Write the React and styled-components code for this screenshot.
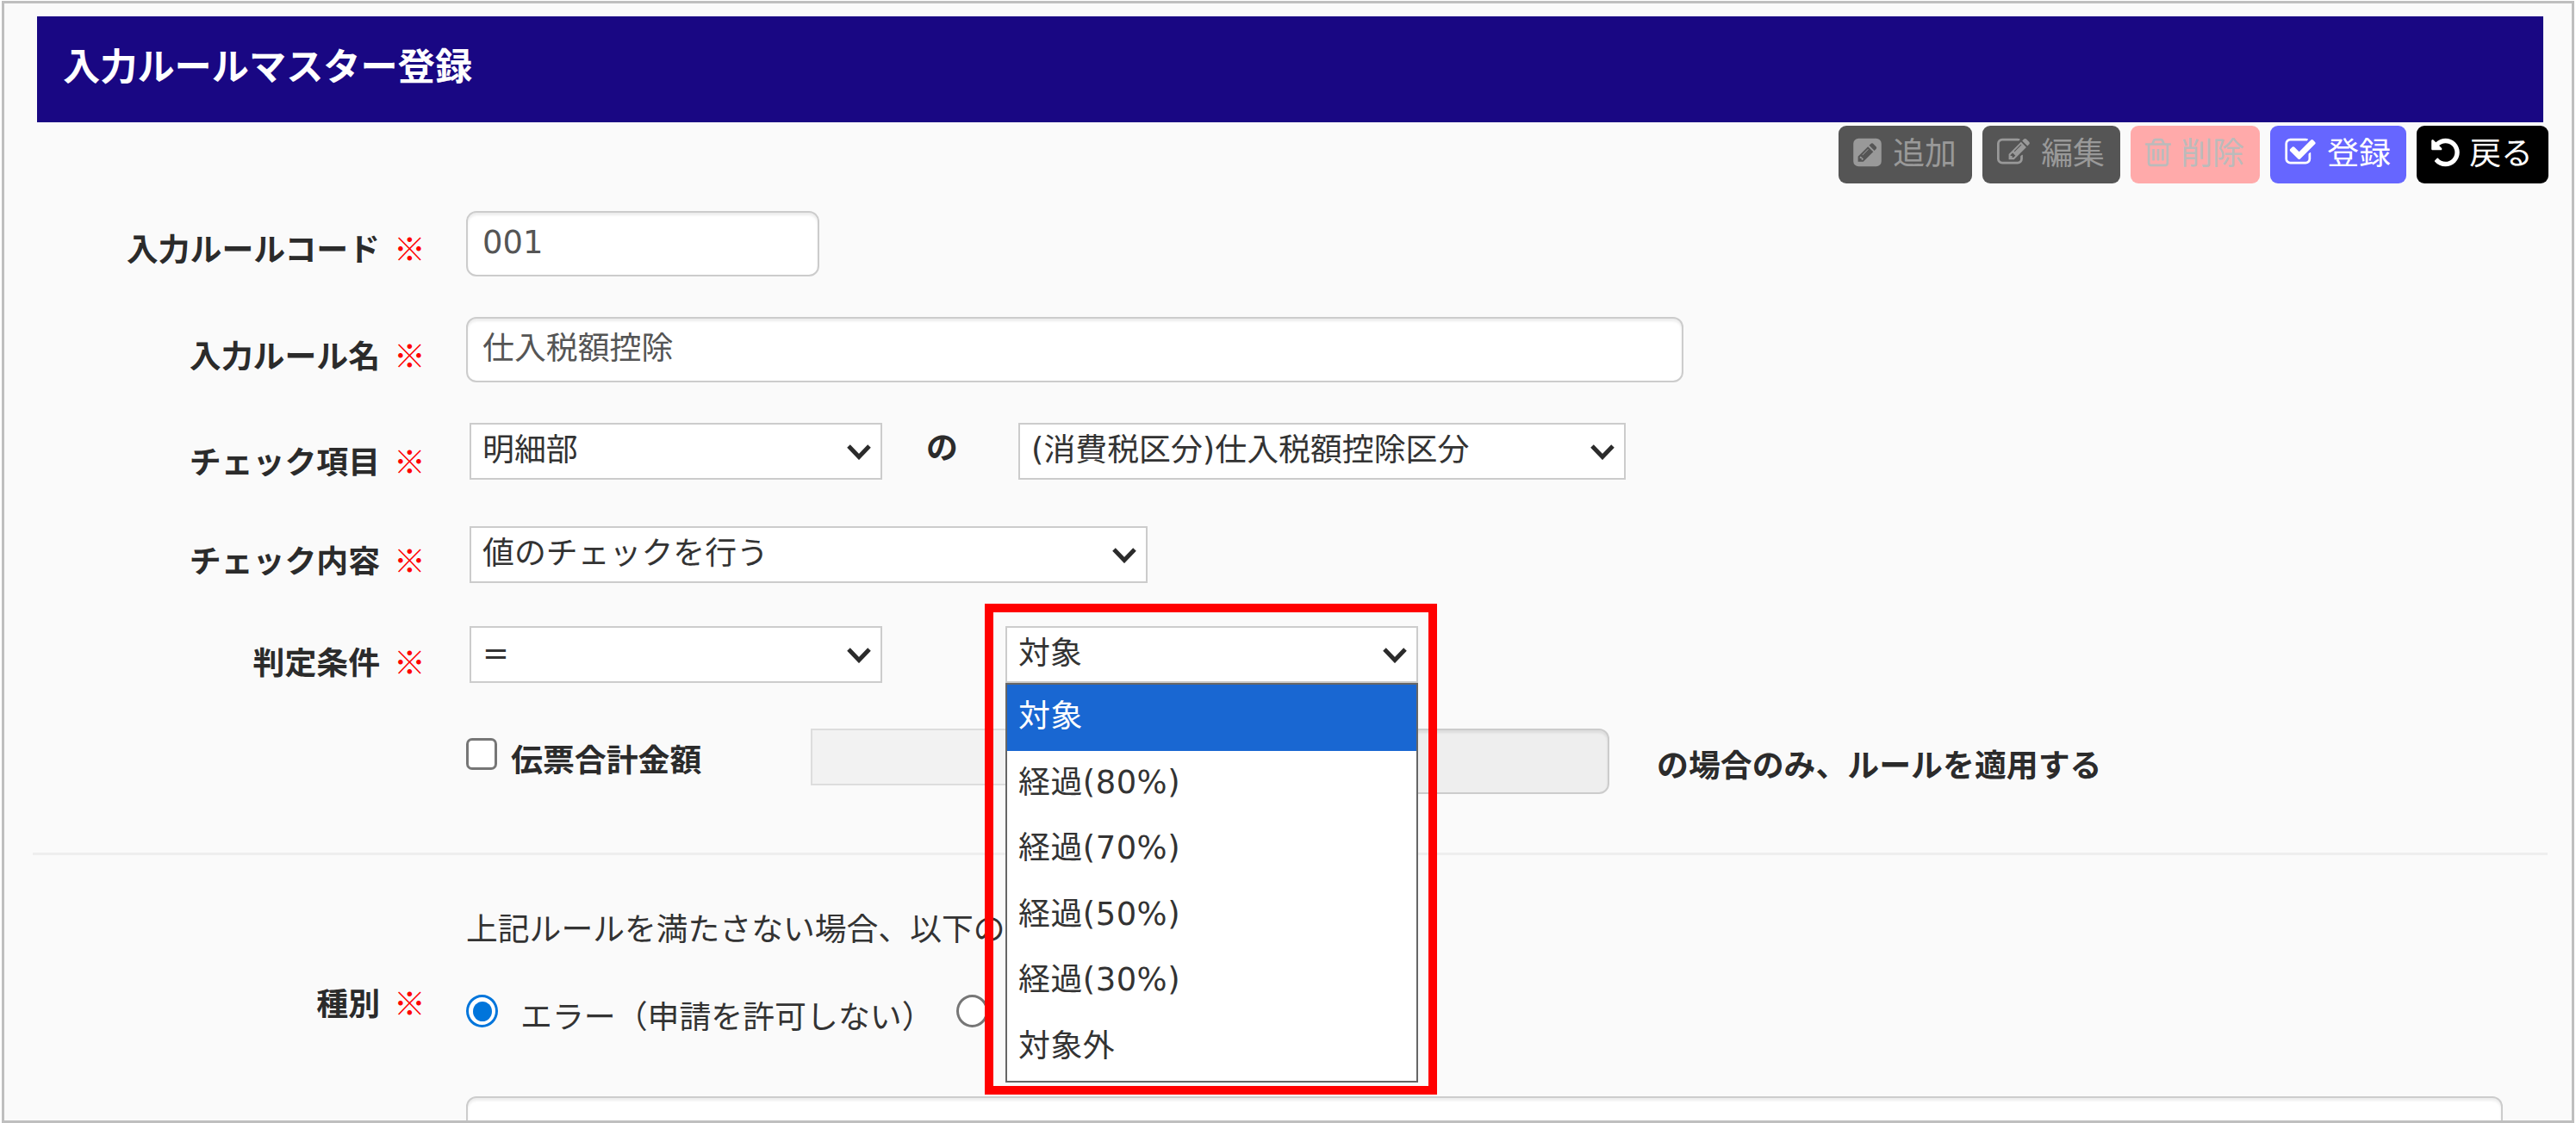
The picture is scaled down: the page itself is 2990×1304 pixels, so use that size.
import React from "react";
import styled, { createGlobalStyle } from "styled-components";

const Global = createGlobalStyle`
  *, *::before, *::after { box-sizing: border-box; }
  html, body { margin: 0; padding: 0; overflow: hidden; }
  body {
    font-family: "DejaVu Sans", "Noto Sans CJK JP", sans-serif;
    font-size: 36.9px;
    color: #333;
    background: #fff;
  }
`;

const Frame = styled.div`
  width: 2990px;
  height: 1304px;
  padding: 1px 2px 0 2px;
  background: #fff;
`;

const Page = styled.main`
  display: flex;
  flex-direction: column;
  height: 1303px;
  border: 3px solid #bfbfbf;
  background: #fafafa;
  overflow: hidden;
`;

const Header = styled.header`
  flex: none;
  display: flex;
  align-items: center;
  height: 123px;
  margin: 15px 33px 0 38px;
  padding: 0 0 13px 30px;
  background: #190783;
`;

const Title = styled.h1`
  margin: 0;
  font-family: "Noto Sans CJK JP", sans-serif;
  font-size: 43.2px;
  line-height: 60px;
  font-weight: 700;
  color: #fff;
`;

const Toolbar = styled.div`
  flex: none;
  display: flex;
  justify-content: flex-end;
  gap: 12px;
  height: 67px;
  margin: 4px 27px 32px 0;
`;

const tones = {
  muted: ["#555555", "#999999"],
  danger: ["#ffaaaa", "#bbbbbb"],
  primary: ["#6666ff", "#ffffff"],
  dark: ["#000000", "#ffffff"],
};

const Button = styled.button`
  display: flex;
  align-items: center;
  justify-content: space-between;
  width: ${(p) => p.$w}px;
  height: 67px;
  padding: 0 18px 6px 17px;
  border: 0;
  border-radius: 9px;
  background: ${(p) => tones[p.$tone][0]};
  color: ${(p) => tones[p.$tone][1]};
  font: 400 36.9px/48px "Noto Sans CJK JP", sans-serif;
  white-space: nowrap;

  span {
    margin-top: -3px;
  }
`;

const Glyph = styled.svg`
  display: block;
  flex: none;
  height: 38px;
  fill: currentColor;
`;

const Row = styled.div`
  flex: none;
  display: flex;
  align-items: flex-start;
  height: ${(p) => p.$h}px;
  padding-left: ${(p) => p.$indent || 0}px;
`;

const Label = styled.label`
  flex: none;
  display: flex;
  justify-content: flex-end;
  gap: 16px;
  width: 489px;
  margin-right: ${(p) => p.$gap || 47}px;
  padding-top: ${(p) => p.$top}px;
  font-family: "Noto Sans CJK JP", sans-serif;
  font-weight: 700;
  font-size: 36.9px;
  line-height: 50px;
  color: #2b2b2b;
`;

const Required = styled.span`
  font-weight: 700;
  color: #f00;
`;

const TextBox = styled.div`
  flex: none;
  width: ${(p) => p.$w}px;
  height: ${(p) => p.$h || 76}px;
  margin-left: ${(p) => p.$ml || 0}px;
  padding: 10px 0 0 17px;
  border: 2px solid #ccc;
  border-radius: 12px;
  background: ${(p) => (p.$disabled ? "#eee" : "#fff")};
  box-shadow: inset 0 3px 3px rgba(0, 0, 0, 0.075);
  color: #555;
  line-height: 50px;
`;

const SelectBox = styled.div`
  flex: none;
  display: flex;
  justify-content: space-between;
  width: ${(p) => p.$w}px;
  height: 66px;
  margin-left: ${(p) => p.$ml || 0}px;
  padding: 5px 11px 0 13px;
  border: 2px solid ${(p) => (p.$disabled ? "#ddd" : "#ccc")};
  background: ${(p) => (p.$disabled ? "#f2f2f2" : "#fff")};
  line-height: 50px;
`;

const Arrow = styled.svg`
  width: 28px;
  height: 18px;
  margin-top: 18px;
  fill: none;
  stroke: #2b2b2b;
  stroke-width: 5;
`;

const Particle = styled.span`
  width: 158px;
  padding: 1px 0 0 51px;
  font: 700 36.9px/50px "Noto Sans CJK JP", sans-serif;
  color: #2b2b2b;
`;

const Picker = styled.div`
  position: relative;
  margin-left: 143px;
`;

const Menu = styled.ul`
  position: absolute;
  z-index: 2;
  top: 66px;
  left: 0;
  width: 479px;
  height: 464px;
  margin: 0;
  padding: 0;
  list-style: none;
  border: 2px solid #666;
  background: #fff;
`;

const Option = styled.li`
  height: ${(p) => (p.$on ? 77 : 76.4)}px;
  padding: 0 0 0 13px;
  line-height: 73px;
  letter-spacing: 0.5px;
  background: ${(p) => (p.$on ? "#1967d2" : "#fff")};
  color: ${(p) => (p.$on ? "#fff" : "#333")};
`;

const Highlight = styled.div`
  position: absolute;
  z-index: 3;
  top: -26px;
  left: -24px;
  width: 525px;
  height: 570px;
  border: 10px solid #f00;
`;

const CheckBox = styled.span`
  flex: none;
  width: 36px;
  height: 37px;
  margin-top: 11px;
  border: 3px solid #767676;
  border-radius: 7px;
  background: #fff;
`;

const BoldText = styled.span`
  flex: none;
  width: ${(p) => p.$w || "auto"};
  margin: ${(p) => p.$m};
  font: 700 36.9px/50px "Noto Sans CJK JP", sans-serif;
  color: #2b2b2b;
  white-space: nowrap;
`;

const Divider = styled.hr`
  flex: none;
  width: 2919px;
  height: 3px;
  margin: 0 0 0 33px;
  border: 0;
  background: #eee;
`;

const Note = styled.p`
  margin: 58px 0 0;
  font: 400 36.8px/50px "Noto Sans CJK JP", sans-serif;
  white-space: nowrap;
`;

const Radio = styled.span`
  flex: none;
  display: flex;
  align-items: center;
  justify-content: center;
  width: 37px;
  height: 38px;
  border: 3px solid ${(p) => (p.$on ? "#0075db" : "#767676")};
  border-radius: 50%;
  background: #fff;

  &::after {
    content: "";
    width: 22px;
    height: 23px;
    border-radius: 50%;
    background: ${(p) => (p.$on ? "#0075db" : "#fff")};
  }
`;

const ChoiceRow = styled.div`
  display: flex;
  align-items: flex-start;
  padding-top: 60px;
`;

const Choice = styled.span`
  flex: none;
  width: 532px;
  margin-top: -2px;
  padding-left: 26px;
  font: 400 36.9px/50px "Noto Sans CJK JP", sans-serif;
  white-space: nowrap;
`;

const icons = {
  add: {
    box: "128 0 1536 1792",
    w: 33,
    d: "M532 1108l152 152-52 52h-56v-96h-96v-56zm414-390q14 13-3 30l-291 291q-17 17-30 3-14-13 3-30l291-291q17-17 30-3zm-274 690l544-544-288-288-544 544v288h288zm608-608l92-92q28-28 28-68t-28-68l-152-152q-28-28-68-28t-68 28l-92 92zm384-384v960q0 119-84.5 203.5t-203.5 84.5h-960q-119 0-203.5-84.5t-84.5-203.5v-960q0-119 84.5-203.5t203.5-84.5h960q119 0 203.5 84.5t84.5 203.5z",
  },
  edit: {
    box: "0 0 1792 1792",
    w: 38,
    d: "M888 1184l116-116-152-152-116 116v56h96v96h56zm440-720q-16-16-33 1l-350 350q-17 17-1 33t33-1l350-350q17-17 1-33zm80 594v190q0 119-84.5 203.5t-203.5 84.5h-832q-119 0-203.5-84.5t-84.5-203.5v-832q0-119 84.5-203.5t203.5-84.5h832q63 0 117 25 15 7 18 23 3 17-9 29l-49 49q-14 14-32 8-23-6-45-6h-832q-66 0-113 47t-47 113v832q0 66 47 113t113 47h832q66 0 113-47t47-113v-126q0-13 9-22l64-64q15-15 35-7t20 29zm-96-738l288 288-672 672h-288v-288zm444 132l-92 92-288-288 92-92q28-28 68-28t68 28l152 152q28 28 28 68t-28 68z",
  },
  remove: {
    box: "192 0 1408 1792",
    w: 30,
    d: "M704 736v576q0 14-9 23t-23 9h-64q-14 0-23-9t-9-23v-576q0-14 9-23t23-9h64q14 0 23 9t9 23zm256 0v576q0 14-9 23t-23 9h-64q-14 0-23-9t-9-23v-576q0-14 9-23t23-9h64q14 0 23 9t9 23zm256 0v576q0 14-9 23t-23 9h-64q-14 0-23-9t-9-23v-576q0-14 9-23t23-9h64q14 0 23 9t9 23zm128 724v-948h-896v948q0 22 7 40.5t14.5 27 10.5 8.5h832q3 0 10.5-8.5t14.5-27 7-40.5zm-672-1076h448l-48-117q-7-9-17-11h-317q-10 2-17 11zm928 32v64q0 14-9 23t-23 9h-96v948q0 83-47 143.5t-113 60.5h-832q-66 0-113-58.5t-47-141.5v-952h-96q-14 0-23-9t-9-23v-64q0-14 9-23t23-9h309l70-167q15-37 54-63t79-26h320q40 0 79 26t54 63l70 167h309q14 0 23 9t9 23z",
  },
  save: {
    box: "64 0 1664 1792",
    w: 36,
    d: "M1472 930v318q0 119-84.5 203.5t-203.5 84.5h-832q-119 0-203.5-84.5t-84.5-203.5v-832q0-119 84.5-203.5t203.5-84.5h832q63 0 117 25 15 7 18 23 3 17-9 29l-49 49q-10 10-23 10-3 0-9-2-23-6-45-6h-832q-66 0-113 47t-47 113v832q0 66 47 113t113 47h832q66 0 113-47t47-113v-254q0-13 9-22l64-64q10-10 23-10 6 0 12 3 20 8 20 29zm231-489l-814 814q-24 24-57 24t-57-24l-430-430q-24-24-24-57t24-57l110-110q24-24 57-24t57 24l263 263 647-647q24-24 57-24t57 24l110 110q24 24 24 57t-24 57z",
  },
  back: {
    box: "128 0 1536 1792",
    w: 33,
    d: "M1664 896q0 156-61 298t-164 245-245 164-298 61q-172 0-327-72.5t-264-204.5q-7-10-6.5-22.5t8.5-20.5l137-138q10-9 25-9 16 2 23 12 73 95 179 147t225 52q104 0 198.5-40.5t163.5-109.5 109.5-163.5 40.5-198.5-40.5-198.5-109.5-163.5-163.5-109.5-198.5-40.5q-98 0-188 35.5t-160 101.5l137 138q31 30 14 69-17 40-59 40h-448q-26 0-45-19t-19-45v-448q0-42 40-59 39-17 69 14l130 129q107-101 244.5-156.5t284.5-55.5q156 0 298 61t245 164 164 245 61 298z",
  },
};

const actions = [
  { icon: "add", text: "追加", tone: "muted", w: 155 },
  { icon: "edit", text: "編集", tone: "muted", w: 160 },
  { icon: "remove", text: "削除", tone: "danger", w: 150 },
  { icon: "save", text: "登録", tone: "primary", w: 158 },
  { icon: "back", text: "戻る", tone: "dark", w: 153 },
];

const options = ["対象", "経過(80%)", "経過(70%)", "経過(50%)", "経過(30%)", "対象外"];

function Icon({ name }) {
  const { box, w, d } = icons[name];
  return (
    <Glyph viewBox={box} width={w} aria-hidden="true">
      <path d={d} />
    </Glyph>
  );
}

function Field({ name, top, gap }) {
  return (
    <Label $top={top} $gap={gap}>
      {name}
      <Required>※</Required>
    </Label>
  );
}

function Select({ value, ...rest }) {
  return (
    <SelectBox {...rest}>
      <span>{value}</span>
      <Arrow viewBox="0 0 28 18">
        <path d="M2 2 L14 14.5 L26 2" />
      </Arrow>
    </SelectBox>
  );
}

export default function App() {
  return (
    <Frame>
      <Global />
      <Page>
        <Header>
          <Title>入力ルールマスター登録</Title>
        </Header>
        <Toolbar>
          {actions.map((a) => (
            <Button key={a.icon} $tone={a.tone} $w={a.w}>
              <Icon name={a.icon} />
              <span>{a.text}</span>
            </Button>
          ))}
        </Toolbar>

        <Row $h={123}>
          <Field name="入力ルールコード" top={17} />
          <TextBox $w={410}>001</TextBox>
        </Row>
        <Row $h={123}>
          <Field name="入力ルール名" top={18} />
          <TextBox $w={1413}>仕入税額控除</TextBox>
        </Row>
        <Row $h={120}>
          <Field name="チェック項目" top={18} gap={51} />
          <Select $w={479} value="明細部" />
          <Particle>の</Particle>
          <Select $w={705} value="(消費税区分)仕入税額控除区分" />
        </Row>
        <Row $h={116}>
          <Field name="チェック内容" top={13} gap={51} />
          <Select $w={787} value="値のチェックを行う" />
        </Row>
        <Row $h={119}>
          <Field name="判定条件" top={15} gap={51} />
          <Select $w={479} value="=" />
          <Picker>
            <Select $w={479} value="対象" />
            <Menu>
              {options.map((o, i) => (
                <Option key={o} $on={i === 0}>
                  {o}
                </Option>
              ))}
            </Menu>
            <Highlight />
          </Picker>
        </Row>
        <Row $h={144} $indent={536}>
          <CheckBox />
          <BoldText $w="348px" $m="9px 0 0 16px">伝票合計金額</BoldText>
          <SelectBox $w={479} $disabled />
          <TextBox $w={410} $ml={38} $disabled />
          <BoldText $m="15px 0 0 55px">の場合のみ、ルールを適用する</BoldText>
        </Row>
        <Divider />
        <Row $h={102} $indent={536}>
          <Note>上記ルールを満たさない場合、以下の</Note>
        </Row>
        <Row $h={178}>
          <Field name="種別" top={43} />
          <ChoiceRow>
            <Radio $on />
            <Choice>エラー（申請を許可しない）</Choice>
            <Radio />
          </ChoiceRow>
        </Row>
        <Row $h={80} $indent={536}>
          <TextBox $w={2364} $h={90} />
        </Row>
      </Page>
    </Frame>
  );
}
